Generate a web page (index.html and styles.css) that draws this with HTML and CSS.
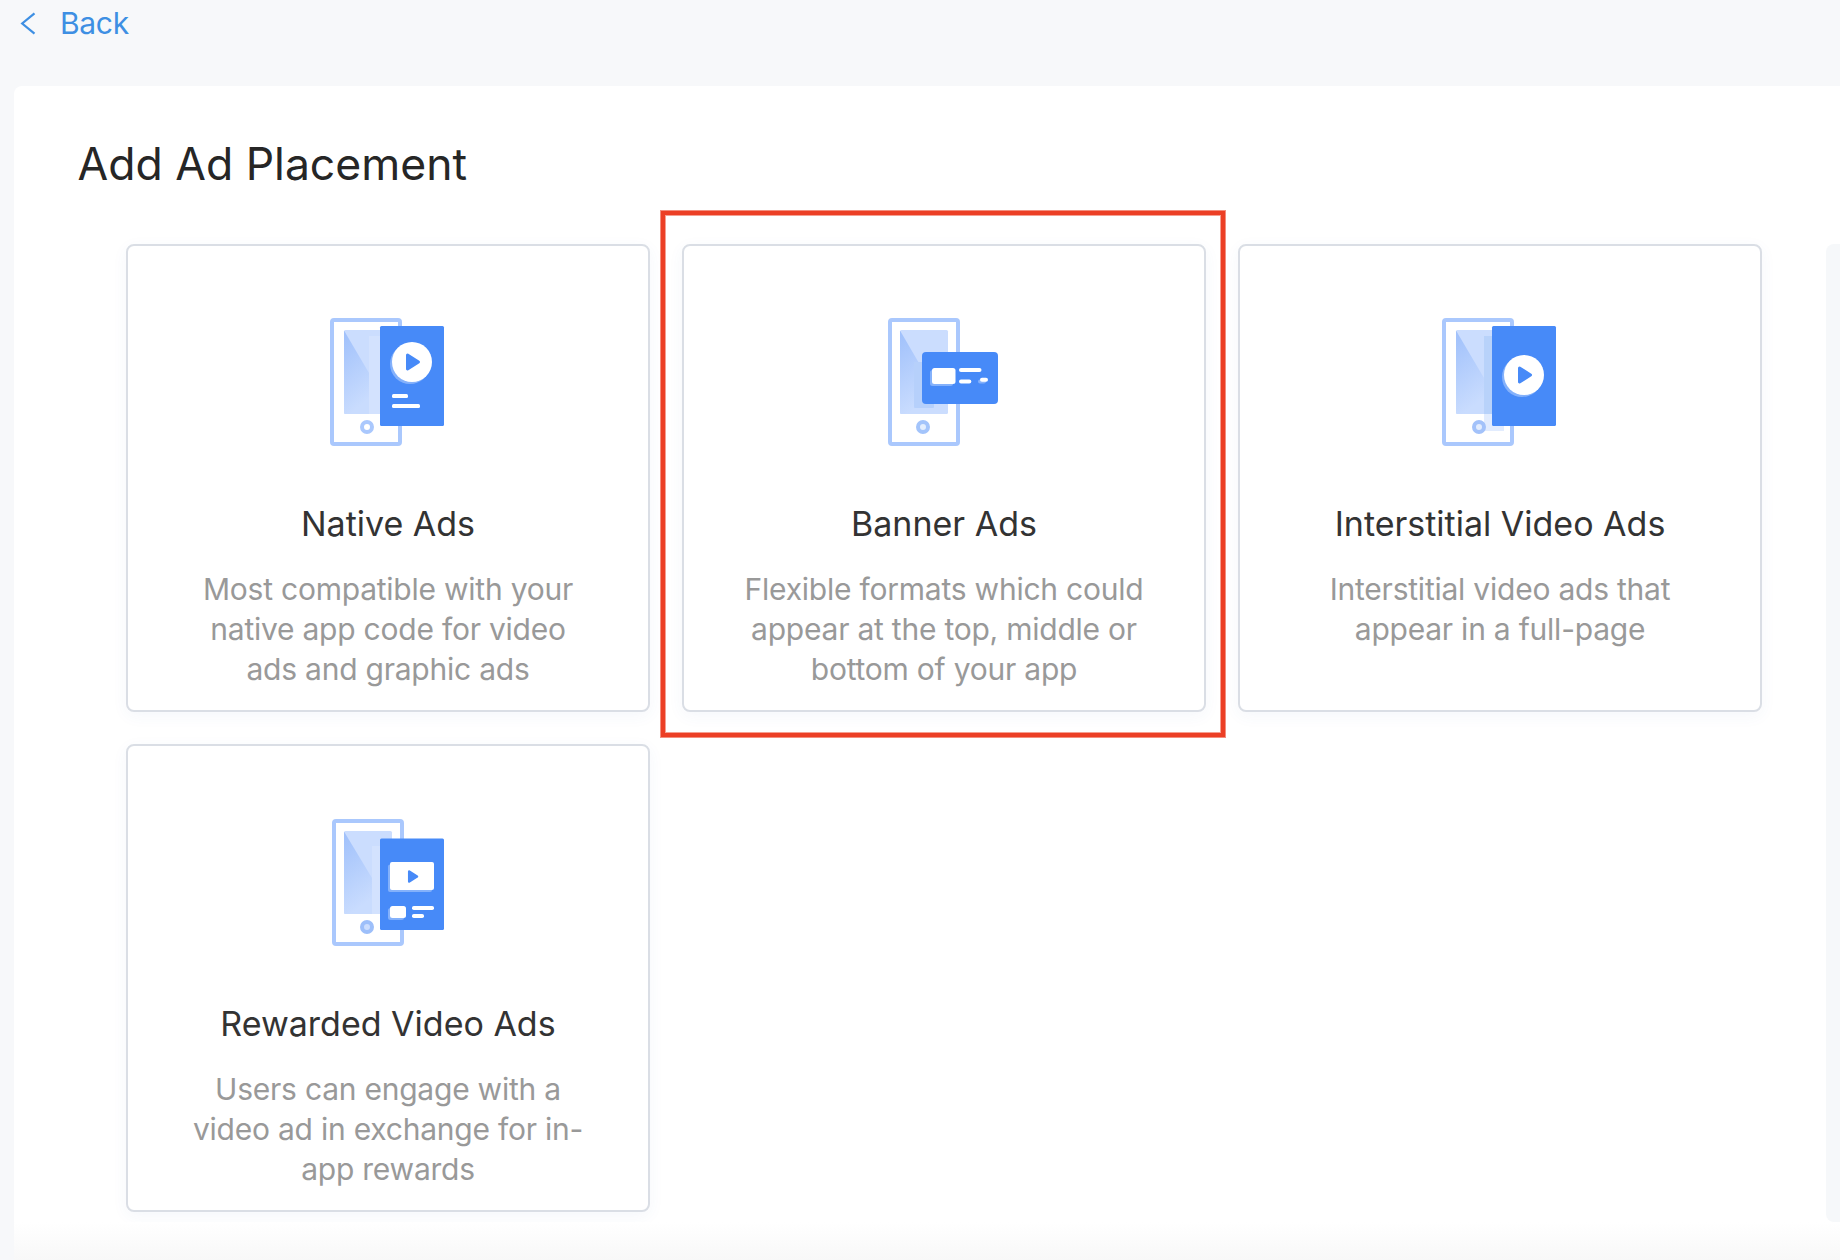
FILE: index.html
```html
<!DOCTYPE html>
<html lang="en">
<head>
<meta charset="utf-8">
<title>Add Ad Placement</title>
<link rel="stylesheet" href="styles.css">
</head>
<body>
<a class="back">
  <svg class="back-icon" width="16" height="24" viewBox="0 0 16 24"><path d="M14.5 2.4 2.2 12.5 14.5 22.6" fill="none" stroke="#3e8fe3" stroke-width="2.2"/></svg>
  <span>Back</span>
</a>
<svg width="0" height="0" class="defs">
  <defs>
    <linearGradient id="glare" x1="0" y1="0" x2="0.25" y2="1">
      <stop offset="0" stop-color="#9fc0fb"/>
      <stop offset="1" stop-color="#c9dcfe"/>
    </linearGradient>
  </defs>
</svg>
<main class="panel">
  <h1 class="title">Add Ad Placement</h1>
  <div class="content">
    <div class="grid">
      <section class="card">
        <svg class="art" viewBox="0 0 156 160">
          <rect x="22" y="20" width="68" height="124" rx="2" fill="#fff" stroke="#aac8fd" stroke-width="4"/>
          <rect x="34" y="30" width="48" height="84" rx="1.5" fill="#cbddfe"/>
          <path d="M34 30.5 59 73V114H35.500Q34 114 34 112.500Z" fill="url(#glare)"/>
          <path d="M59 36h12v78H59z" fill="#d3e2fe"/>
          <circle cx="57" cy="127" r="5" fill="#fff" stroke="#aac8fd" stroke-width="4"/>
          <rect x="70" y="26" width="64" height="100" rx="1.5" fill="#478af8"/>
          <circle cx="100" cy="64" r="20" fill="#84b1fb"/>
          <circle cx="102" cy="62" r="20" fill="#fff"/>
          <path d="M97.500 55 108.500 62 97.500 69Z" fill="#478af8" stroke="#478af8" stroke-width="3" stroke-linejoin="round"/>
          <rect x="82" y="94" width="16" height="4" rx="1.5" fill="#fff"/>
          <rect x="82" y="104" width="28" height="4" rx="1.5" fill="#fff"/>
        </svg>
        <h2 class="name">Native Ads</h2>
        <p class="desc">Most compatible with your<br>native app code for video<br>ads and graphic ads</p>
      </section>
      <section class="card card-marked">
        <svg class="art" viewBox="-4 0 156 160">
          <rect x="20" y="20" width="68" height="124" rx="2" fill="#fff" stroke="#aac8fd" stroke-width="4"/>
          <rect x="30" y="30" width="48" height="84" rx="1.5" fill="#cbddfe"/>
          <path d="M30 30.500 60 82V114H31.500Q30 114 30 112.500Z" fill="url(#glare)"/>
          <rect x="44" y="62" width="20" height="46" rx="1" fill="#b6d0fb"/>
          <circle cx="53" cy="127" r="5" fill="#e3eefe" stroke="#a3c4fb" stroke-width="4"/>
          <rect x="52" y="52" width="76" height="52" rx="4" fill="#478af8"/>
          <rect x="60" y="70" width="23" height="16" rx="2.500" fill="#84b1fb"/>
          <rect x="62" y="68" width="23.500" height="16" rx="2.500" fill="#fff"/>
          <rect x="89" y="68" width="22.500" height="4" rx="2" fill="#fff"/>
          <rect x="89" y="79.500" width="12.300" height="4" rx="2" fill="#fff"/>
          <rect x="108" y="79.500" width="8" height="4" rx="2" fill="#84b1fb"/>
          <rect x="110" y="77.700" width="8" height="4" rx="2" fill="#fff"/>
        </svg>
        <h2 class="name">Banner Ads</h2>
        <p class="desc">Flexible formats which could<br>appear at the top, middle or<br>bottom of your app</p>
      </section>
      <section class="card">
        <svg class="art" viewBox="-8 0 156 160">
          <rect x="14" y="20" width="68" height="124" rx="2" fill="#fff" stroke="#aac8fd" stroke-width="4"/>
          <rect x="26" y="30" width="48" height="84" rx="1.500" fill="#cbddfe"/>
          <path d="M26 30.500 54 78V114H27.500Q26 114 26 112.500Z" fill="url(#glare)"/>
          <path d="M54 36h8v78h-8z" fill="#b8d2fa"/>
          <path d="M54 114h20v17H55q-1 0-1-1z" fill="#e2ecfe"/>
          <circle cx="49" cy="127" r="5" fill="#e3edfe" stroke="#a3c2fa" stroke-width="4"/>
          <rect x="62" y="26" width="64" height="100" rx="1.500" fill="#478af8"/>
          <circle cx="92" cy="77" r="20" fill="#84b1fb"/>
          <circle cx="94" cy="75" r="20" fill="#fff"/>
          <path d="M89.500 68 100.500 75 89.500 82Z" fill="#478af8" stroke="#478af8" stroke-width="3" stroke-linejoin="round"/>
        </svg>
        <h2 class="name">Interstitial Video Ads</h2>
        <p class="desc">Interstitial video ads that<br>appear in a full-page</p>
      </section>
      <section class="card">
        <svg class="art" viewBox="0 0 156 160">
          <rect x="24" y="21" width="68" height="123" rx="2" fill="#fff" stroke="#aac8fd" stroke-width="4"/>
          <rect x="34" y="31" width="48" height="83" rx="1.500" fill="#cbddfe"/>
          <path d="M34 31.500 62 78V114H35.500Q34 114 34 112.500Z" fill="url(#glare)"/>
          <path d="M62 46h8v68h-8z" fill="#d3e2fe"/>
          <circle cx="57" cy="127" r="5" fill="#cbddfe" stroke="#9dbffa" stroke-width="4"/>
          <rect x="70" y="38.500" width="64" height="91.500" rx="1.500" fill="#478af8"/>
          <rect x="78" y="64.500" width="44" height="27.500" rx="2" fill="#84b1fb"/>
          <rect x="80" y="62" width="44" height="28" rx="2" fill="#fff"/>
          <path d="M99.200 71.500 107 76.500 99.200 81.500Z" fill="#478af8" stroke="#478af8" stroke-width="2.500" stroke-linejoin="round"/>
          <rect x="78" y="108" width="16" height="12" rx="2.500" fill="#84b1fb"/>
          <rect x="80" y="106" width="16" height="12" rx="2.500" fill="#fff"/>
          <rect x="102" y="106" width="22" height="4" rx="1.800" fill="#fff"/>
          <rect x="102" y="114" width="12" height="4" rx="1.800" fill="#fff"/>
        </svg>
        <h2 class="name">Rewarded Video Ads</h2>
        <p class="desc">Users can engage with a<br>video ad in exchange for in-<br>app rewards</p>
      </section>
    </div>
    <aside class="side"></aside>
  </div>
  <div class="fade"></div>
</main>
</body>
</html>
```
FILE: styles.css
```css
* {
  box-sizing: border-box;
}

body {
  margin: 0;
  height: 1260px;
  overflow: hidden;
  display: flex;
  flex-direction: column;
  background: #f7f8fa;
  font-family: Inter, "Liberation Sans", sans-serif;
  font-weight: 400;
}

.defs {
  display: block;
  flex: none;
}

.back {
  flex: none;
  display: flex;
  align-items: center;
  gap: 24px;
  height: 86px;
  padding: 3px 0 43px 20px;
  color: #3e8fe3;
  font-size: 30px;
  letter-spacing: -0.3px;
  line-height: 40px;
}

.panel {
  flex: 1;
  display: flex;
  flex-direction: column;
  margin-left: 14px;
  padding-top: 51px;
  background: #fff;
  border-top-left-radius: 8px;
}

.title {
  margin: 0 0 53px 63.5px;
  color: #262626;
  font-size: 44.5px;
  font-weight: 400;
  line-height: 54px;
}

.content {
  display: flex;
  justify-content: space-between;
  padding-left: 112px;
}

.grid {
  display: grid;
  grid-template-columns: repeat(3, 524px);
  grid-auto-rows: 468px;
  gap: 32px;
}

.card {
  display: flex;
  flex-direction: column;
  align-items: center;
  padding-top: 54px;
  background: #fff;
  border: 2px solid #dadee5;
  border-radius: 8px;
  box-shadow: 0 4px 16px rgba(60, 90, 180, 0.05);
}

.card-marked {
  position: relative;
}

.card-marked::after {
  content: "";
  position: absolute;
  inset: -35px -21px -27px -23px;
  border: 4px solid #ec3f25;
  box-shadow: 0 0 0 1px #f38e7e, inset 0 0 0 1px #f59f91;
}

.art {
  width: 156px;
  height: 160px;
}

.name {
  margin: 44px 0 25px;
  color: #333;
  font-size: 34px;
  font-weight: 400;
  line-height: 40px;
}

.desc {
  margin: 0;
  color: #999;
  font-size: 30px;
  letter-spacing: -0.23px;
  line-height: 40px;
  text-align: center;
}

.side {
  width: 14px;
  height: 978px;
  background: #f6f8fa;
  border-radius: 8px 0 0 8px;
}

.fade {
  flex: 1;
  background: linear-gradient(#fff, #f8f8f8);
}
```
